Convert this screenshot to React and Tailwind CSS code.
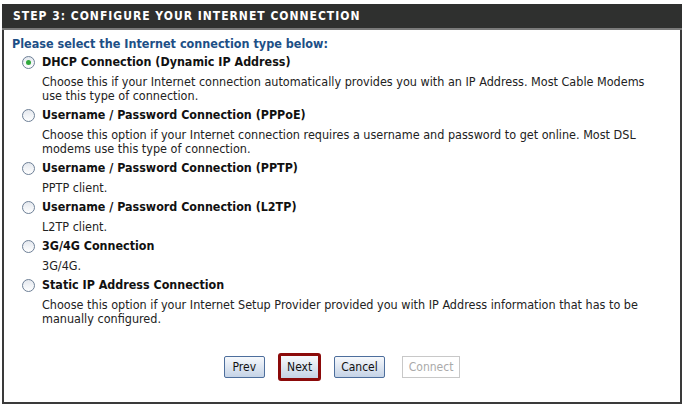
import React from "react";

const options = [
  { label: "DHCP Connection (Dynamic IP Address)", desc: ["Choose this if your Internet connection automatically provides you with an IP Address. Most Cable Modems", "use this type of connection."], checked: true },
  { label: "Username / Password Connection (PPPoE)", desc: ["Choose this option if your Internet connection requires a username and password to get online. Most DSL", "modems use this type of connection."] },
  { label: "Username / Password Connection (PPTP)", desc: ["PPTP client."] },
  { label: "Username / Password Connection (L2TP)", desc: ["L2TP client."] },
  { label: "3G/4G Connection", desc: ["3G/4G."] },
  { label: "Static IP Address Connection", desc: ["Choose this option if your Internet Setup Provider provided you with IP Address information that has to be", "manually configured."] },
];

function Radio({ checked }) {
  return (
    <span className="w-[13px] h-[13px] rounded-full border border-[#6d7f96] bg-gradient-to-b from-[#e4e8ee] to-white flex items-center justify-center shrink-0">
      {checked && <span className="w-[5px] h-[5px] rounded-full bg-[#2fa83a]" />}
    </span>
  );
}

function Btn({ children, red, px }) {
  return (
    <button
      className={
        "bg-gradient-to-b from-[#f7f9fc] to-[#c5d3e6] text-[12px] text-[#111] leading-none " +
        (red ? "h-[28px] border-[3px] border-[#8b0a0a] rounded-[3px] px-[6px]" : "h-[22px] rounded-[2px] border border-[#4d6e9c] " + px)
      }
    >
      {children}
    </button>
  );
}

export default function App() {
  return (
    <div className="w-[684px] h-[408px] bg-white pt-[4px] px-[2px] pb-[4px]" style={{ fontFamily: '"DejaVu Sans Condensed", "DejaVu Sans", sans-serif' }}>
      <div className="h-full flex flex-col border-x-2 border-b-2 border-[#3a3a3a]">
        <div className="h-[26px] bg-[#2f302f] border-b-2 border-[#7a7a7a] flex items-center pl-[11px] shrink-0 -mx-[2px]">
          <span className="text-white font-bold text-[12px] tracking-[1px]">STEP 3: CONFIGURE YOUR INTERNET CONNECTION</span>
        </div>
        <div className="flex-1 flex flex-col pl-[8px] pt-[6px]">
          <div className="text-[#1d4f86] font-bold text-[12.5px] leading-[15px]">Please select the Internet connection type below:</div>
          <div className="flex flex-col pl-[10px] pt-[4px] gap-[5px]">
            {options.map((o, i) => (
              <div key={i} className="flex flex-col">
                <div className="flex items-center gap-[7px] h-[15px]">
                  <Radio checked={o.checked} />
                  <span className="font-bold text-[12.4px] text-[#111]">{o.label}</span>
                </div>
                <div className="pl-[20px] pt-[5px] text-[12.5px] leading-[14px] text-[#222]">
                  {o.desc.map((d, j) => <div key={j}>{d}</div>)}
                </div>
              </div>
            ))}
          </div>
          <div className="flex items-center justify-center gap-[13px] mt-[27px] pr-[8px]">
            <Btn px="px-[8px]">Prev</Btn>
            <Btn red>Next</Btn>
            <Btn px="px-[6px]">Cancel</Btn>
            <button className="ml-[4px] h-[22px] px-[6px] border border-[#c8c8c8] bg-white text-[12px] text-[#aaa] leading-none">Connect</button>
          </div>
        </div>
      </div>
    </div>
  );
}
